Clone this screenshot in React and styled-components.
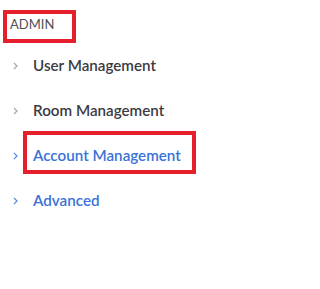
import styled, { createGlobalStyle } from "styled-components";

const GlobalStyle = createGlobalStyle`
  html, body {
    margin: 0;
    padding: 0;
    background: #fff;
  }
  body {
    font-family: Lato, "Noto Sans", sans-serif;
  }
`;

const Page = styled.div`
  width: 320px;
  height: 289px;
  padding: 10px 0 0 3px;
  box-sizing: border-box;
`;

const SectionTitle = styled.div`
  width: 73px;
  height: 33px;
  box-sizing: border-box;
  border: 4px solid #e51f2b;
  padding: 2px 0 0 3px;
  font-size: 13px;
  color: #4f4f55;
  line-height: 16px;
`;

const Menu = styled.ul`
  list-style: none;
  margin: 0;
  padding: 0;
  display: flex;
  flex-direction: column;
`;

const Item = styled.li`
  display: flex;
  align-items: center;
  height: 45px;
  padding-left: 10px;
  color: ${(p) => (p.$active ? "#3a72d8" : "#3b3b43")};
`;

const Chevron = styled.svg`
  width: 5px;
  height: 8px;
  margin-right: 12px;
  flex: none;
`;

const Label = styled.span`
  font-size: 15.2px;
  font-weight: 600;
  padding: 12px 11px 6px 6px;
  margin: 0 0 6px -7px;
  border: 4px solid ${(p) => (p.$boxed ? "#e51f2b" : "transparent")};
  line-height: 17px;
`;

const items = [
  { name: "User Management" },
  { name: "Room Management" },
  { name: "Account Management", active: true, boxed: true },
  { name: "Advanced", active: true },
];

function ArrowRight({ color }) {
  return (
    <Chevron viewBox="0 0 5 8">
      <path d="M1 1L4 4L1 7" fill="none" stroke={color} strokeWidth="1.2" />
    </Chevron>
  );
}

export default function App() {
  return (
    <>
      <GlobalStyle />
      <Page>
        <SectionTitle>ADMIN</SectionTitle>
        <Menu>
          {items.map((it) => (
            <Item key={it.name} $active={it.active}>
              <ArrowRight color={it.active ? "#5b8be0" : "#a5a5a5"} />
              <Label $boxed={it.boxed}>{it.name}</Label>
            </Item>
          ))}
        </Menu>
      </Page>
    </>
  );
}
